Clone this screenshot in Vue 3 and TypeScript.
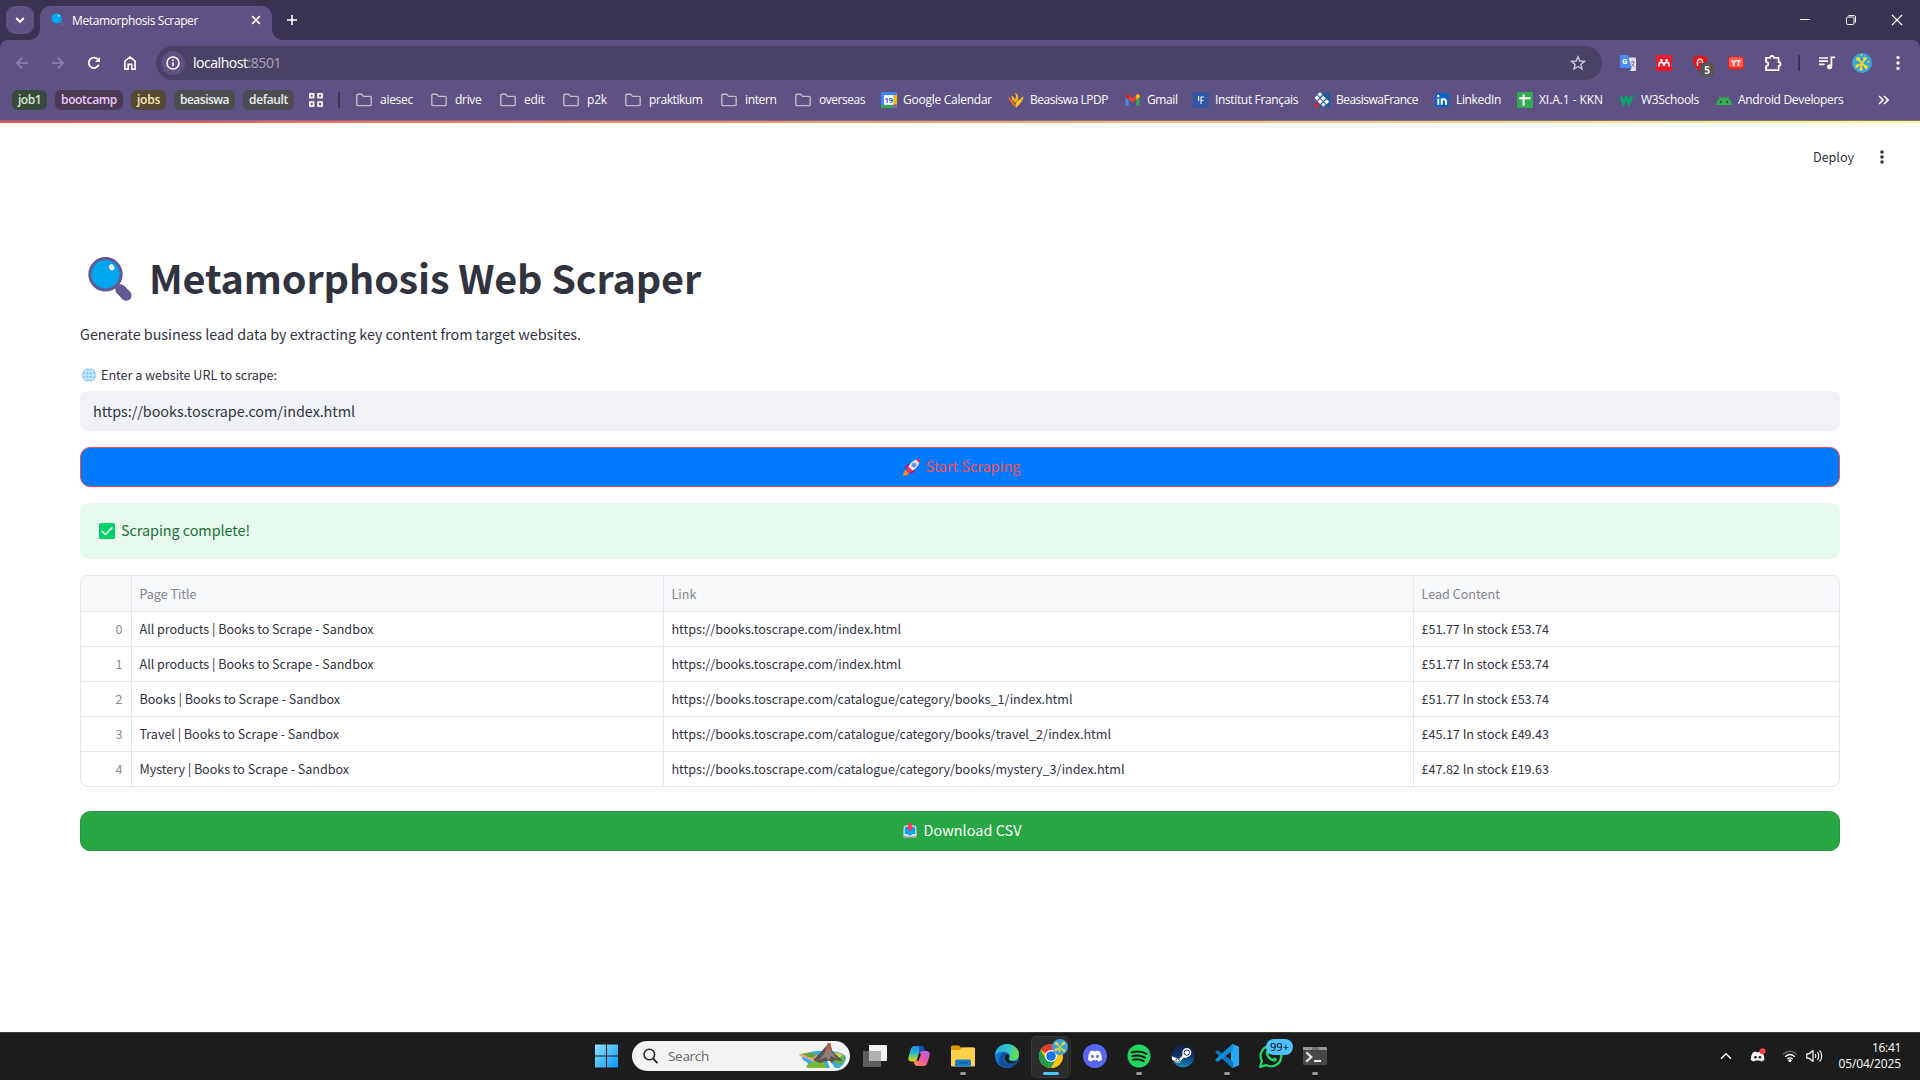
<script setup lang="ts">
import type { Directive } from 'vue'

// Spreads or tightens a label's letters so it fills the given width in pixels.
const vFit: Directive<HTMLElement, number> = {
  mounted(el, { value }) {
    const count = (el.textContent ?? '').length
    if (!count) return
    el.style.letterSpacing = `${(value - el.getBoundingClientRect().width) / count}px`
  },
}

interface Group { label: string; tone: string; width: number; fit: number }
const groups: Group[] = [
  { label: 'job1', tone: 'green', width: 35, fit: 23 },
  { label: 'bootcamp', tone: 'plum', width: 68, fit: 56 },
  { label: 'jobs', tone: 'olive', width: 35, fit: 23 },
  { label: 'beasiswa', tone: 'grey', width: 61, fit: 49 },
  { label: 'default', tone: 'grey', width: 51, fit: 39 },
]

interface Bookmark { label: string; icon: string; width: number; fit: number }
const bookmarks: Bookmark[] = [
  { label: 'aiesec', icon: 'folder', width: 75, fit: 33 },
  { label: 'drive', icon: 'folder', width: 69, fit: 26.5 },
  { label: 'edit', icon: 'folder', width: 63, fit: 20.5 },
  { label: 'p2k', icon: 'folder', width: 62, fit: 20 },
  { label: 'praktikum', icon: 'folder', width: 96, fit: 53.5 },
  { label: 'intern', icon: 'folder', width: 74, fit: 31.5 },
  { label: 'overseas', icon: 'folder', width: 86, fit: 46 },
  { label: 'Google Calendar', icon: 'calendar', width: 127, fit: 89 },
  { label: 'Beasiswa LPDP', icon: 'lpdp', width: 117, fit: 78 },
  { label: 'Gmail', icon: 'gmail', width: 68, fit: 30.5 },
  { label: 'Institut Français', icon: 'institut', width: 121, fit: 83 },
  { label: 'BeasiswaFrance', icon: 'france', width: 120, fit: 82 },
  { label: 'LinkedIn', icon: 'linkedin', width: 83, fit: 45 },
  { label: 'XI.A.1 - KKN', icon: 'sheet', width: 102, fit: 64 },
  { label: 'W3Schools', icon: 'w3', width: 97, fit: 58 },
  { label: 'Android Developers', icon: 'android', width: 134, fit: 105.5 },
]

interface Row { title: string; titleFit: number; link: string; linkFit: number; lead: string }
const rows: Row[] = [
  { title: 'All products | Books to Scrape - Sandbox', titleFit: 234, link: 'https://books.toscrape.com/index.html', linkFit: 229.5, lead: '£51.77 In stock £53.74' },
  { title: 'All products | Books to Scrape - Sandbox', titleFit: 234, link: 'https://books.toscrape.com/index.html', linkFit: 229.5, lead: '£51.77 In stock £53.74' },
  { title: 'Books | Books to Scrape - Sandbox', titleFit: 200.5, link: 'https://books.toscrape.com/catalogue/category/books_1/index.html', linkFit: 401, lead: '£51.77 In stock £53.74' },
  { title: 'Travel | Books to Scrape - Sandbox', titleFit: 199.5, link: 'https://books.toscrape.com/catalogue/category/books/travel_2/index.html', linkFit: 439.5, lead: '£45.17 In stock £49.43' },
  { title: 'Mystery | Books to Scrape - Sandbox', titleFit: 209.5, link: 'https://books.toscrape.com/catalogue/category/books/mystery_3/index.html', linkFit: 453, lead: '£47.82 In stock £19.63' },
]

interface App { name: string; state: '' | 'open' | 'active' }
const apps: App[] = [
  { name: 'taskview', state: '' },
  { name: 'copilot', state: '' },
  { name: 'explorer', state: 'open' },
  { name: 'edge', state: '' },
  { name: 'chrome', state: 'active' },
  { name: 'discord', state: '' },
  { name: 'spotify', state: 'open' },
  { name: 'steam', state: '' },
  { name: 'vscode', state: 'open' },
  { name: 'whatsapp', state: '' },
  { name: 'terminal', state: 'open' },
]
</script>

<template>
  <div class="screen">
    <header class="tabs">
      <button class="tab-search">
        <svg width="10" height="8" viewBox="0 0 10 8"><path d="M1.2 2 5 5.8 8.8 2" fill="none" stroke="#fff" stroke-width="2" /></svg>
      </button>
      <div class="tab">
        <svg class="favicon" width="14" height="14" viewBox="0 0 44 44">
          <path d="M29 28 38 38" stroke="#6b5b9a" stroke-width="9" stroke-linecap="round" />
          <circle cx="18" cy="17" r="16.5" fill="#00a6ed" /><circle cx="24" cy="9" r="3" fill="#e8f7ff" />
        </svg>
        <span v-fit="126" class="tab-title">Metamorphosis Scraper</span>
        <svg class="tab-close" width="10" height="10" viewBox="0 0 10 10"><path d="M1.2 1.2 8.8 8.8M8.8 1.2 1.2 8.8" stroke="#fff" stroke-width="1.7" /></svg>
      </div>
      <svg class="new-tab" width="10" height="10" viewBox="0 0 10 10"><path d="M5 0V10M0 5H10" stroke="#fff" stroke-width="1.6" /></svg>
      <div class="window-controls">
        <svg width="12" height="12" viewBox="0 0 12 12"><path d="M1 5.5H11" stroke="#fff" /></svg>
        <svg width="12" height="12" viewBox="0 0 12 12"><rect x="1.5" y="3" width="7.5" height="7.5" rx="1.3" fill="none" stroke="#fff" /><path d="M3.5 1.5H8.8Q10.5 1.5 10.5 3.2V8.5" fill="none" stroke="#fff" /></svg>
        <svg width="12" height="12" viewBox="0 0 12 12"><path d="M1 1 11 11M11 1 1 11" stroke="#fff" stroke-width="1.1" /></svg>
      </div>
    </header>

    <div class="toolbar">
      <div class="nav">
        <svg class="dim" width="14" height="14" viewBox="0 0 14 14"><path d="M13 7H2M7.3 1.5 1.8 7 7.3 12.5" fill="none" stroke="currentColor" stroke-width="1.6" /></svg>
        <svg class="dim" width="14" height="14" viewBox="0 0 14 14"><path d="M1 7H12M6.7 1.5 12.2 7 6.7 12.5" fill="none" stroke="currentColor" stroke-width="1.6" /></svg>
        <svg width="14" height="14" viewBox="0 0 14 14"><path d="M11.8 8.6A5.2 5.2 0 1 1 11 3.6L12.4 5" fill="none" stroke="#fff" stroke-width="1.8" /><path d="M13 1V6H8Z" fill="#fff" /></svg>
        <svg width="14" height="14" viewBox="0 0 14 14"><path d="M1.9 13.1V5.2L7 1.1 12.1 5.2V13.1H8.8V8.4H5.2V13.1Z" fill="none" stroke="#fff" stroke-width="1.6" /></svg>
      </div>
      <div class="omnibox">
        <div class="site-info">
          <svg width="14" height="14" viewBox="0 0 14 14"><circle cx="7" cy="7" r="6" fill="none" stroke="#fff" stroke-width="1.6" /><path d="M7 6.2V10.2M7 3.6V5.1" stroke="#fff" stroke-width="1.6" /></svg>
        </div>
        <span v-fit="88" class="address">localhost<i>:8501</i></span>
        <svg class="star" width="16" height="16" viewBox="0 0 16 16"><path d="M8 1.8 9.8 6 14.4 6.4 10.9 9.4 12 14 8 11.5 4 14 5.1 9.4 1.6 6.4 6.2 6Z" fill="none" stroke="#c9c6d3" stroke-width="1.4" /></svg>
      </div>
      <div class="extensions">
        <svg width="16" height="16" viewBox="0 0 16 16">
          <path d="M7 2.5H15Q16 2.5 16 3.5V15Q16 16 15 16H10Z" fill="#e1e3e6" /><path d="M1 0H8L11.5 13H1Q0 13 0 12V1Q0 0 1 0Z" fill="#4a8af4" /><path d="M8 13H11.5L10 16Z" fill="#2c5fc4" />
          <path d="M10.5 7H15M12.7 5.8V7M14 7Q13.5 10 11 12M11.5 8.5 14.5 12" fill="none" stroke="#6d7b87" stroke-width=".9" />
          <text x="2" y="9.2" class="glyph" font-size="7.5" font-weight="700" fill="#fff">G</text>
        </svg>
        <svg width="16" height="16" viewBox="0 0 16 16"><rect width="16" height="16" rx=".5" fill="#e81b2d" /><path d="M3 11.4V9.6Q3 7.4 5.2 7.4T8 9.4Q8.6 7.4 10.8 7.4T13 9.6V11.4" fill="none" stroke="#fff" stroke-width="1.6" /><circle cx="5.4" cy="5.4" r="1.4" fill="#fff" /><circle cx="10.6" cy="5.4" r="1.4" fill="#fff" /><circle cx="8" cy="9.6" r="1.4" fill="#fff" /></svg>
        <div class="blocker">
          <svg width="16" height="16" viewBox="0 0 16 16"><path d="M8 0Q11 2 15 2.2 15.4 11 8 16 .6 11 1 2.2 5 2 8 0Z" fill="#f20d0d" /><path d="M5.5 11V7Q5.5 4 8 4T10.5 7V11M8 6.5V8" fill="none" stroke="#ffd9d9" stroke-width="1.6" /></svg>
          <b>5</b>
        </div>
        <svg width="16" height="16" viewBox="0 0 16 16"><rect y="1.5" width="16" height="13" rx="3" fill="#e8271c" /><rect x="1" y="2.3" width="14" height="10" rx="2.5" fill="#ff5b52" /><text x="8" y="11" text-anchor="middle" class="glyph" font-size="8" font-weight="700" fill="#fff">YT</text></svg>
        <svg width="18" height="18" viewBox="0 0 18 18"><path d="M2 3.8H6.2Q6.2 1.8 8 1.8T9.8 3.8H14.6V8.2Q16.5 8.2 16.5 10T14.6 11.8V16.2H2V12.2Q4.4 12 4.4 10T2 7.8Z" fill="none" stroke="#fff" stroke-width="1.8" stroke-linejoin="round" /></svg>
      </div>
      <i class="divider" />
      <svg class="media" width="16" height="14" viewBox="0 0 16 14"><path d="M0 2H9M0 5.2H9M0 8.4H5.5M12.4 10.5V1.3H16" fill="none" stroke="#fff" stroke-width="1.7" /><circle cx="10.6" cy="10.7" r="2.5" fill="#fff" /></svg>
      <svg class="avatar" width="20" height="20" viewBox="0 0 20 20"><circle cx="10" cy="10" r="10" fill="#3ea2dc" /><path d="M6.5 6 10 10.5M13.5 5.5 10 10.5M5.5 13 10 10.5M14 14 10 10.5M9 15 10 10.5" stroke="#f5dc1c" stroke-width="1.7" /><g fill="#f5dc1c"><circle cx="6" cy="6" r="2" /><circle cx="13" cy="5.5" r="1.8" /><circle cx="5" cy="13" r="1.8" /><circle cx="9" cy="16" r="1.7" /><circle cx="14" cy="14" r="1.9" /><circle cx="16.5" cy="9" r="1" /><circle cx="9.5" cy="2" r=".9" /></g></svg>
      <svg class="menu" width="4" height="16" viewBox="0 0 4 16"><g fill="#fff"><circle cx="2" cy="2.6" r="1.7" /><circle cx="2" cy="8" r="1.7" /><circle cx="2" cy="13.4" r="1.7" /></g></svg>
    </div>

    <nav class="bookmarks">
      <div class="groups">
        <span v-for="g in groups" :key="g.label" class="group" :class="g.tone" :style="{ width: g.width + 'px' }"><span v-fit="g.fit">{{ g.label }}</span></span>
      </div>
      <svg class="apps-grid" width="14" height="14" viewBox="0 0 14 14"><g fill="none" stroke="#fff" stroke-width="1.7"><rect x=".9" y=".9" width="3.7" height="3.7" /><rect x="9.1" y=".9" width="3.9" height="3.7" /><rect x=".9" y="9.1" width="3.7" height="3.9" /><rect x="9.1" y="9.1" width="3.9" height="3.9" /></g></svg>
      <i class="divider" />
      <div class="links">
        <a v-for="b in bookmarks" :key="b.label" class="bookmark" :class="{ folder: b.icon === 'folder' }" :style="{ width: b.width + 'px' }">
          <svg width="16" height="16" viewBox="0 0 16 16">
            <path v-if="b.icon === 'folder'" d="M.8 3.4Q.8 2.3 1.9 2.3H5.6L7.5 4.4H14.1Q15.2 4.4 15.2 5.5V12.5Q15.2 13.6 14.1 13.6H1.9Q.8 13.6 .8 12.5Z" fill="none" stroke="#c0bcc8" stroke-width="1.4" />
            <g v-else-if="b.icon === 'calendar'"><rect width="16" height="16" rx="1.5" fill="#4285f4" /><path d="M12.5 3H16V12.5H12.5Z" fill="#fbbc04" /><path d="M0 12.5H12.5V16H1.5Q0 16 0 14.5Z" fill="#34a853" /><path d="M12.5 12.5H16L12.5 16Z" fill="#ea4335" /><rect x="3" y="3.2" width="9.5" height="9.5" fill="#fff" /><text x="7.8" y="10.8" text-anchor="middle" class="glyph" font-size="7.5" font-weight="700" fill="#2a66d9">19</text></g>
            <g v-else-if="b.icon === 'lpdp'"><path d="M0 5Q5 6 8 15 4 13.5 0 5Z" fill="#f06a1c" /><path d="M16 4Q14 11 8 15.8 7 12.5 9 9.5 11.5 7.5 16 4Z" fill="#fbc51b" /><path d="M6.5 .5Q12 3 9.8 8L7.5 11Q5.5 9 7.8 5.5 8.6 3.5 6.5 .5Z" fill="#f9b21a" /><path d="M3.2 3.5Q7 5 7 10 4.5 8.5 3.2 3.5Z" fill="#f9d21a" /></g>
            <g v-else-if="b.icon === 'gmail'"><path d="M.5 3.5V13.5H3.8V6Z" fill="#4285f4" /><path d="M11.2 6V13.5H14.5V3.5Z" fill="#34a853" /><path d="M.5 3.8Q.5 1.8 2.6 2.2L7.5 6.2 12.4 2.2Q14.5 1.8 14.5 3.8L14.4 5.2 7.5 10.3 .5 5.2Z" fill="#ea4335" /><path d="M11.2 3.2 12.4 2.2Q14.5 1.8 14.5 3.8V5.2L11.2 7.6Z" fill="#fbbc04" /><path d="M.5 3.8Q.5 1.8 2.6 2.2L3.8 3.1V7.6L.5 5.2Z" fill="#c5221f" /></g>
            <g v-else-if="b.icon === 'institut'"><rect width="16" height="16" fill="#3157a4" /><path d="M5.6 4V9M8 12V5H11M8 8.5H10.5" fill="none" stroke="#e9eefa" stroke-width="1.2" /></g>
            <g v-else-if="b.icon === 'france'"><path d="M3 1H16V15H5Z" fill="#2159a5" /><g fill="#fff"><path d="M6 0 8.5 2.5 6 5 3.5 2.5Z" /><path d="M3 3.5 5.5 6 3 8.5 .5 6Z" /><path d="M9.3 3.7 11.8 6.2 9.3 8.7 6.8 6.2Z" /><path d="M6.1 7 8.6 9.5 6.1 12 3.6 9.5Z" /><path d="M12.6 7.2 15.1 9.7 12.6 12.2 10.1 9.7Z" /><path d="M9.4 10.4 11.6 12.6 9.4 14.8 7.2 12.6Z" /></g><path d="M3 10.5 5.6 13.2 3 16 .4 13.2Z" fill="#e52321" /></g>
            <g v-else-if="b.icon === 'linkedin'"><rect x="1" y="1" width="14" height="14" rx="1" fill="#0a66c2" /><path d="M4.3 6.4V12.7M7.7 12.7V6.4M7.7 9.3Q8 7.2 9.9 7.2T12 9.4V12.7" fill="none" stroke="#fff" stroke-width="1.9" /><circle cx="4.3" cy="4" r="1.2" fill="#fff" /></g>
            <g v-else-if="b.icon === 'sheet'"><rect width="16" height="16" rx="1.2" fill="#34a853" /><path d="M2.3 6.2H13.7M6.6 2.5V13.7" stroke="#fff" stroke-width="1.9" /></g>
            <g v-else-if="b.icon === 'w3'"><path d="M2 4.5 4.6 11.6 7.4 5.5 10 11.6 12.6 4.5" fill="none" stroke="#04aa6d" stroke-width="2.7" /><path d="M13.4 3.3H15.4L14.4 4.6Q15.8 4.8 15.4 6 14.8 6.8 13.4 6.3" fill="none" stroke="#04aa6d" stroke-width=".7" /></g>
            <g v-else><path d="M0 13Q.8 5.5 8 5.3 15.2 5.5 16 13Z" fill="#34a853" /><path d="M4.8 6.6 2.8 3.4M11.2 6.6 13.2 3.4" stroke="#34a853" stroke-width="1.1" /><circle cx="4.7" cy="10" r=".9" fill="#1c4026" /><circle cx="11.3" cy="10" r=".9" fill="#1c4026" /></g>
          </svg>
          <span v-fit="b.fit">{{ b.label }}</span>
        </a>
      </div>
      <svg class="more" width="11" height="10" viewBox="0 0 11 10"><path d="M1 1 5 5 1 9M6 1 10 5 6 9" fill="none" stroke="#fff" stroke-width="1.6" /></svg>
    </nav>

    <main class="page">
      <div class="decoration" />
      <div class="app-bar">
        <span v-fit="41" class="deploy">Deploy</span>
        <svg width="4" height="14" viewBox="0 0 4 14"><g fill="#31333f"><circle cx="2" cy="2" r="1.8" /><circle cx="2" cy="7" r="1.8" /><circle cx="2" cy="12" r="1.8" /></g></svg>
      </div>
      <div class="content">
        <h1>
          <svg width="44" height="44" viewBox="0 0 44 44">
            <path d="M28 28 32 32" stroke="#635994" stroke-width="5" />
            <path d="M32.5 32.5 38.3 38.5" stroke="#635994" stroke-width="10.5" stroke-linecap="round" />
            <circle cx="17.5" cy="17.3" r="15.7" fill="#00a6ed" stroke="#635994" stroke-width="3" />
            <ellipse cx="23.6" cy="10.3" rx="2.6" ry="3.2" fill="#fff" transform="rotate(-25 23.6 10.3)" />
          </svg>
          <span v-fit="552">Metamorphosis Web Scraper</span>
        </h1>
        <p class="lede"><span v-fit="501">Generate business lead data by extracting key content from target websites.</span></p>
        <label class="field-label">
          <svg width="14" height="14" viewBox="0 0 14 14"><circle cx="7" cy="7" r="7" fill="#83cbff" /><path d="M7 0V14M0 7H14M1.3 3.4H12.7M1.3 10.6H12.7" stroke="#eef8ff" stroke-width=".8" /><ellipse cx="7" cy="7" rx="3.8" ry="6.8" fill="none" stroke="#eef8ff" stroke-width=".8" /></svg>
          <span v-fit="176">Enter a website URL to scrape:</span>
        </label>
        <div class="field"><span v-fit="262">https://books.toscrape.com/index.html</span></div>

        <button class="action start">
          <svg width="17" height="17" viewBox="0 0 17 17">
            <path d="M4.2 9.5 1.5 9.8 4 6Q5 4.8 7.3 5.2ZM7.5 12.8 7.2 15.5 11 13Q12.2 12 11.8 9.7Z" fill="#ca0b4a" />
            <path d="M1 12.5Q2 10.8 4 11.3L5.6 13Q6 15 4.5 16L0 17Z" fill="#ff822d" />
            <path d="M4 11.6Q6 3 13.5 .6L16.4 3.5Q14 11 5.5 13.1Z" fill="#f1eff5" />
            <path d="M13 .8Q15 0 17 0 17 2 16.2 4Z" fill="#f8312f" />
            <path d="M3.6 12.2Q3.8 9.8 5.6 7.8L9.4 11.5Q7 13.4 4.8 13.5Z" fill="#f8315f" />
            <circle cx="11" cy="6" r="2.3" fill="#5092ff" stroke="#b4acbc" stroke-width=".9" />
          </svg>
          <span v-fit="95">Start Scraping</span>
        </button>

        <div class="alert">
          <svg width="16" height="16" viewBox="0 0 16 16"><rect width="16" height="16" rx="1.6" fill="#00d26a" /><path d="M3.2 8.4 6.4 11.5 12.9 4.9" fill="none" stroke="#f4f4f4" stroke-width="1.7" stroke-linecap="round" stroke-linejoin="round" /></svg>
          <span v-fit="129">Scraping complete!</span>
        </div>

        <div class="grid">
          <div class="row head">
            <div class="cell index" />
            <div class="cell title"><span v-fit="57">Page Title</span></div>
            <div class="cell link"><span v-fit="25">Link</span></div>
            <div class="cell lead"><span v-fit="78.5">Lead Content</span></div>
          </div>
          <div v-for="(r, i) in rows" :key="i" class="row">
            <div class="cell index">{{ i }}</div>
            <div class="cell title"><span v-fit="r.titleFit">{{ r.title }}</span></div>
            <div class="cell link"><span v-fit="r.linkFit">{{ r.link }}</span></div>
            <div class="cell lead"><span v-fit="127.5">{{ r.lead }}</span></div>
          </div>
        </div>

        <button class="action download">
          <svg width="14" height="15" viewBox="0 0 14 15">
            <path d="M1 7H13L14 12V15H0V12Z" fill="#9b9b9b" /><rect x=".6" y="2.5" width="12.8" height="11" rx="2.2" fill="#d9dde3" />
            <path d="M1.8 3.8H12.2V11H9.2L8.4 12.2H5.6L4.8 11H1.8Z" fill="#00a6ed" /><path d="M5.3 0H8.7V4H11L7 8.4 3 4H5.3Z" fill="#f8315f" />
          </svg>
          <span v-fit="98">Download CSV</span>
        </button>
      </div>
    </main>

    <footer class="taskbar">
      <div class="pinned">
        <svg class="start-logo" width="24" height="24" viewBox="0 0 24 24">
          <defs><linearGradient id="win" x1="0" y1="0" x2="1" y2="1"><stop offset="0" stop-color="#8fe4ff" /><stop offset="1" stop-color="#0a93f5" /></linearGradient></defs>
          <path d="M0 .5H11V11.5H0ZM12 .5H23V11.5H12ZM0 12.5H11V23.5H0ZM12 12.5H23V23.5H12Z" fill="url(#win)" />
        </svg>
        <div class="search">
          <svg width="15" height="16" viewBox="0 0 15 16"><circle cx="6.3" cy="6.5" r="5.3" fill="none" stroke="#2b2b2b" stroke-width="1.6" /><path d="M10.2 10.6 14 14.6" stroke="#2b2b2b" stroke-width="1.9" stroke-linecap="round" /></svg>
          <span v-fit="41">Search</span>
          <svg class="highlight" width="48" height="26" viewBox="0 0 48 26">
            <path d="M2 12Q14 7 30 8T47 15Q46 21 40 25H8Q12 20 4 17Z" fill="#39a8e8" />
            <path d="M0 11Q7 9 16 11L26 17 14 19Q8 15 1 13Z" fill="#d9b27c" /><path d="M3 11Q9 9 18 11L14 15Q8 14 3 11Z" fill="#6aa43a" />
            <path d="M8 22Q16 16 26 20L28 25H10Q6 24 8 22Z" fill="#79b82f" /><path d="M31 11Q40 8 46 14L45 19 38 22Z" fill="#68b53b" /><path d="M34 10Q41 9 44 13L38 15Z" fill="#d3cf4d" />
            <path d="M14 17 22 9 28 2 31 2 34 9 44 18 36 17 31 21 27 18 21 20Z" fill="#5f5351" /><path d="M28 3 25 11 20 17 27 14 30 18 32 13 38 16 32 8 31 3Z" fill="#8f7f78" />
            <path d="M26.5 8 28.5 0 31.5 0 33 8 30 6Z" fill="#b45f4e" /><path d="M28 18 31 25H36Q33 21 31 18Z" fill="#f5fbff" />
          </svg>
        </div>
        <div v-for="a in apps" :key="a.name" class="app" :class="a.state">
          <svg width="24" height="24" viewBox="0 0 24 24">
            <g v-if="a.name === 'taskview'"><rect x="6" y="1" width="18" height="16" rx="1" fill="#f2f2f2" /><rect x="0" y="7" width="18" height="16" rx="1" fill="#5d5d5d" /><path d="M6 7H18V17H6Z" fill="#b1b1b1" /></g>
            <g v-else-if="a.name === 'copilot'">
              <defs><linearGradient id="co1" x1="0" y1="0" x2="0" y2="1"><stop offset="0" stop-color="#1b8df3" /><stop offset=".45" stop-color="#27b5c8" /><stop offset=".75" stop-color="#8fd14f" /><stop offset="1" stop-color="#f8c62c" /></linearGradient><linearGradient id="co2" x1="1" y1="0" x2="0" y2="1"><stop offset="0" stop-color="#a963f1" /><stop offset=".5" stop-color="#f0589b" /><stop offset="1" stop-color="#ff9b3d" /></linearGradient></defs>
              <path d="M7 2H14Q16.5 2 17.2 4.5L17.8 7H15Q12.5 7 11.6 10L10 15Q9 18 6 17.5H4Q.5 17 1.6 12.5L3.8 5Q4.8 2 7 2Z" fill="url(#co1)" />
              <path d="M17 22H10.5Q8 22 7.2 19.5L6.6 17.5Q9.2 17.6 10 15L12.2 9Q13.2 6.7 16 7H19.8Q23.5 7.3 22.5 11.5L20.4 19Q19.4 22 17 22Z" fill="url(#co2)" /><path d="M12 2H14Q16.5 2 17.2 4.5L17.8 7H16Q13 7 12.2 9Z" fill="#174cb8" /><path d="M12.2 9 9.8 16.4 11.6 17 14 10Z" fill="#1c1c1c" />
            </g>
            <g v-else-if="a.name === 'explorer'"><path d="M0 3Q0 1.5 1.5 1.5H8L10 3.5H22.5Q24 3.5 24 5V10H0Z" fill="#e0970c" /><path d="M0 6H8.5L11 3.5H22.5Q24 3.5 24 5V21.5Q24 22.5 23 22.5H1Q0 22.5 0 21.5Z" fill="#ffd04a" /><path d="M4 22.5V17.5Q4 15.5 6 15.5H18Q20 15.5 20 17.5V22.5Z" fill="#1380cf" /><path d="M7.5 18.7H16.5" stroke="#0b559a" stroke-width="1.5" /></g>
            <g v-else-if="a.name === 'edge'">
              <defs><linearGradient id="ed" x1="0" y1="0" x2="1" y2=".3"><stop offset="0" stop-color="#27a8e4" /><stop offset=".55" stop-color="#2ac4c7" /><stop offset="1" stop-color="#68dd5c" /></linearGradient></defs>
              <circle cx="12" cy="12" r="12" fill="#1474cf" /><path d="M0 12C0 5 5 0 12 0S24 5 24 10.5C24 14.5 21 16.4 18 16.4 14.8 16.4 13.3 15.3 14.2 14.2 16.4 10.5 13 7.7 8.8 7.7 4.2 7.7 .7 9.5 0 12Z" fill="url(#ed)" /><path d="M8.5 8.2Q14 10 9.8 12.5 7.5 19 15 20.2 19 20.5 22.5 17.2 19 23.8 12 24 4 23.5 4 16.5 4.5 10 8.5 8.2Z" fill="#124f9d" /><path d="M10.2 12Q8.5 19.5 17 19.7 20 19.5 22.7 17 17 18.5 13.8 16Q13 15 14.2 13.8Q14.8 10.5 11.8 9.8Z" fill="#1c1c1c" />
            </g>
            <g v-else-if="a.name === 'chrome'"><circle cx="12" cy="12" r="12" fill="#fbc116" /><path d="M12 12 1.6 6A12 12 0 0 1 22.4 6H12Z" fill="#e33b2e" /><path d="M1.6 6A12 12 0 0 0 12 24L17.2 15 12 12 6.8 15Z" fill="#229b4b" /><path d="M12 6H22.4A12 12 0 0 1 12 24L17.2 15Z" fill="#fbc116" /><circle cx="12" cy="12" r="6" fill="#fff" /><circle cx="12" cy="12" r="4.8" fill="#1a73e8" /></g>
            <g v-else-if="a.name === 'discord'"><circle cx="12" cy="12" r="12" fill="#5865f2" /><path d="M7.3 7.3Q9 6.5 10.1 6.4L10.6 7.3H13.4L13.9 6.4Q15.3 6.6 16.7 7.3 19.3 11 18.9 15.7 17 17.2 15.2 17.5L14.3 16.1Q12 16.6 9.7 16.1L8.8 17.5Q7 17.2 5.1 15.7 4.7 11 7.3 7.3Z" fill="#fff" /><ellipse cx="9.5" cy="12.4" rx="1.4" ry="1.6" fill="#5865f2" /><ellipse cx="14.5" cy="12.4" rx="1.4" ry="1.6" fill="#5865f2" /></g>
            <g v-else-if="a.name === 'spotify'"><circle cx="12" cy="12" r="11.5" fill="#1ed760" /><path d="M4.7 8.5Q12.5 6 19.6 9.9M5.4 12.3Q12 10.4 18 13.6M6 15.8Q11.8 14.4 16.6 17" fill="none" stroke="#171717" stroke-width="2" stroke-linecap="round" /></g>
            <g v-else-if="a.name === 'steam'">
              <defs><linearGradient id="st" x1="0" y1="0" x2="0" y2="1"><stop offset="0" stop-color="#141b45" /><stop offset=".5" stop-color="#0d3466" /><stop offset="1" stop-color="#1689bf" /></linearGradient></defs>
              <circle cx="12" cy="12" r="11.3" fill="url(#st)" /><path d="M.8 12.2 8 15 12.5 10.5 14 12.5 9.5 17Q8.5 20 5.8 19 4 18.5 3.5 16.8L1 15.8Z" fill="#fff" /><path d="M11.5 11 16 12.5" stroke="#fff" stroke-width="3.6" /><circle cx="15.8" cy="8.6" r="4.5" fill="#fff" /><circle cx="15.8" cy="8.6" r="2.7" fill="none" stroke="#173057" stroke-width="1" /><circle cx="6.6" cy="16.6" r="1.8" fill="none" stroke="#173057" stroke-width=".8" />
            </g>
            <g v-else-if="a.name === 'vscode'"><path d="M17.3 0 24 2.8V21.2L17.3 24 16 18V6Z" fill="#29a9f2" /><path d="M17.3 24 0 8.3 2 6.4Q2.6 6 3.3 6.5L18 17.8V23Z" fill="#0877bd" /><path d="M17.3 0 0 15.7 2 17.6Q2.6 18 3.3 17.5L18 6.2V1Z" fill="#118fd6" /></g>
            <g v-else-if="a.name === 'whatsapp'"><path d="M1.2 22.8 2.9 17A10.3 10.3 0 1 1 7 21.1Z" fill="none" stroke="#25d366" stroke-width="2.3" stroke-linejoin="round" /><path d="M7.4 6.4Q8.7 5.4 9.4 7L10.2 8.9 9.3 10.4Q11 13.5 14 14.7L15.4 13.3 17.8 14.6Q18 17 15.7 17.7 12.5 18 8.7 14 5.2 9.4 7.4 6.4Z" fill="#25d366" /></g>
            <g v-else><rect x="0" y="3" width="24" height="18" rx="1" fill="#474747" /><path d="M0 6V4Q0 3 1 3H23Q24 3 24 4V6Z" fill="#9a9a9a" /><path d="M9 3H16V6H9Z" fill="#717171" /><path d="M3.2 8.3 8.3 13 3.2 17.7" fill="none" stroke="#e4e4e4" stroke-width="2.3" /><path d="M11 17H18" stroke="#fff" stroke-width="1.8" /></g>
          </svg>
          <svg v-if="a.name === 'chrome'" class="profile" width="16" height="16" viewBox="0 0 16 16"><circle cx="8" cy="8" r="8" fill="#3ea2dc" /><path d="M4.5 4.5 8 8.5M11.5 4 8 8.5M4 11 8 8.5M12 11.5 8 8.5M7.5 13 8 8.5" stroke="#f5dc1c" stroke-width="1.5" stroke-dasharray="3.4 .6" /><g fill="#f5dc1c"><circle cx="11.6" cy="4.2" r="1.5" /><circle cx="4.4" cy="4.4" r="1.5" /><circle cx="3.6" cy="11" r="1.3" /><circle cx="12" cy="11.6" r="1.4" /></g></svg>
          <span v-if="a.name === 'whatsapp'" class="count">99+</span>
          <i v-if="a.state" class="indicator" />
        </div>
      </div>
      <div class="tray">
        <svg class="caret" width="12" height="8" viewBox="0 0 12 8"><path d="M1 6.8 6 1.8 11 6.8" fill="none" stroke="#fff" stroke-width="1.4" /></svg>
        <svg class="chat" width="16" height="16" viewBox="0 0 16 16"><path d="M3 4.3Q4.6 3.4 5.7 3.4L6.2 4.3H9L9.5 3.4Q11 3.6 12.2 4.3 14.8 8 14.4 12 12.5 13.3 11 13.6L10.1 12.4H5.1L4.2 13.6Q2.7 13.3 .8 12 .4 8 3 4.3Z" fill="#f5f5f5" /><circle cx="5.4" cy="9.2" r="1.3" fill="#1c1c1c" /><circle cx="10" cy="9.2" r="1.3" fill="#1c1c1c" /><circle cx="12.5" cy="3.2" r="3" fill="#f23f42" /></svg>
        <svg class="wifi" width="16" height="14" viewBox="0 0 16 14"><path d="M1 5.5Q8-1 15 5.5" fill="none" stroke="#686868" stroke-width="1.2" /><path d="M3.2 7.8Q8 3.3 12.8 7.8M5.3 10Q8 7.7 10.7 10" fill="none" stroke="#fff" stroke-width="1.3" /><circle cx="8" cy="11.6" r="1.6" fill="#fff" /></svg>
        <svg class="sound" width="17" height="14" viewBox="0 0 17 14"><path d="M.8 4.8H3.2L7 1.5V12.5L3.2 9.2H.8Z" fill="none" stroke="#fff" stroke-width="1.2" stroke-linejoin="round" /><path d="M9.2 5Q10.4 7 9.2 9M11.4 3Q14 7 11.4 11M13.6 1.2Q17.8 7 13.6 12.8" fill="none" stroke="#fff" stroke-width="1.1" /></svg>
        <div class="clock"><span v-fit="29">16:41</span><span v-fit="62.5">05/04/2025</span></div>
      </div>
    </footer>
  </div>
</template>

<style>
body { margin: 0; background: #fff; }
</style>

<style scoped>
* { box-sizing: border-box; }
svg { display: block; flex: none; }
button { border: 0; padding: 0; margin: 0; font: inherit; color: inherit; }
span { white-space: nowrap; }
i { font-style: normal; }
.glyph { font-family: "Open Sans", sans-serif; }
.screen { width: 1920px; height: 1080px; overflow: hidden; display: flex; flex-direction: column; background: #3b3354; font-family: "Open Sans", "Noto Sans", sans-serif; color: #fff; }

/* tab strip */
.tabs { height: 40px; flex: none; display: flex; align-items: flex-start; background: #3b3354; }
.tab-search { width: 28px; height: 28px; margin: 6px 6px 0; border-radius: 9px; background: #5e5184; display: flex; align-items: center; justify-content: center; }
.tab { position: relative; width: 232px; height: 34px; margin-top: 6px; border-radius: 10px 10px 0 0; background: #5e5184; display: flex; align-items: center; padding: 0 11px 6px 11px; }
.tab::before, .tab::after { content: ""; position: absolute; bottom: 0; width: 10px; height: 10px; }
.tab::before { left: -10px; background: radial-gradient(circle at 0 0, transparent 9.5px, #5e5184 10px); }
.tab::after { right: -10px; background: radial-gradient(circle at 100% 0, transparent 9.5px, #5e5184 10px); }
.tab-title { margin-left: 7px; padding-top: 1px; font-size: 12px; line-height: 18px; }
.tab-close { margin-left: auto; }
.new-tab { margin: 15px 0 0 15px; }
.window-controls { margin: 14px 17px 0 auto; display: flex; gap: 34px; }

/* toolbar */
.toolbar { height: 46px; flex: none; display: flex; align-items: center; background: #5e5184; border-radius: 8px 8px 0 0; }
.nav { display: flex; gap: 22px; margin-left: 15px; }
.dim { color: #8f85ad; }
.omnibox { width: 1446px; height: 34px; margin-left: 19px; border-radius: 17px; background: #494166; display: flex; align-items: center; padding: 0 16px 0 5px; }
.site-info { width: 24px; height: 24px; border-radius: 50%; background: #5e5184; display: flex; align-items: center; justify-content: center; }
.address { margin-left: 8px; font-size: 14px; line-height: 20px; }
.address i { color: #a9a4b8; }
.star { margin-left: auto; }
.extensions { display: flex; align-items: center; gap: 20px; margin-left: 18px; }
.blocker { position: relative; }
.blocker b { position: absolute; left: 8px; top: 8px; width: 14px; height: 14px; border-radius: 3px; background: #555; font-size: 10px; line-height: 14px; text-align: center; }
.divider { width: 2px; height: 16px; border-radius: 1px; background: #3b3354; }
.toolbar .divider { margin-left: 16px; }
.media { margin-left: 19px; }
.avatar { margin-left: 17px; }
.menu { margin-left: 24px; }

/* bookmarks */
.bookmarks { height: 35px; flex: none; display: flex; align-items: flex-start; padding: 4px 0 0 12px; background: #5e5184; border-bottom: 1px solid #7a7295; font-size: 12px; }
.groups { display: flex; gap: 8px; }
.group { height: 20px; border-radius: 6px; display: flex; align-items: center; justify-content: center; font-weight: 600; line-height: 18px; padding-bottom: 1px; }
.green { background: #3a4a3e; color: #c9efcd; }
.plum { background: #4a3a55; color: #e8cbfa; }
.olive { background: #544a35; color: #fbeab0; }
.grey { background: #4b4d50; color: #eceef0; }
.apps-grid { margin: 3px 0 0 15px; }
.bookmarks .divider { margin: 2px 0 0 15px; }
.links { display: flex; margin-left: 16px; }
.bookmark { height: 20px; flex: none; display: flex; align-items: center; gap: 6px; line-height: 18px; }
.folder { gap: 8px; }
.bookmark > span { padding-bottom: 1px; }
.more { margin: 5px 0 0 28px; }

/* page */
.page { flex: 1; background: #fff; color: #31333f; font-family: "Noto Sans CJK SC", "Open Sans", sans-serif; font-size: 14.4px; }
.decoration { height: 2px; background: linear-gradient(90deg, #ff4b4b, #fffd80); }
.app-bar { height: 68px; display: flex; align-items: center; justify-content: flex-end; gap: 26px; padding-right: 36px; }
.deploy { font-size: 12.6px; line-height: 20px; }
.content { padding: 57px 80px 0; }
h1 { margin: 0; height: 58px; display: flex; align-items: center; padding-left: 8px; gap: 17px; font-size: 39.6px; line-height: 58px; font-weight: 700; }
h1 svg { margin-top: 3px; }
.lede { margin: 16px 0 0; line-height: 24px; }
.field-label { display: flex; align-items: center; gap: 5px; margin-top: 17px; padding-left: 2px; height: 24px; font-size: 12.6px; line-height: 24px; }
.field { margin-top: 4px; height: 40px; border-radius: 8px; background: #f0f2f6; padding: 0 13px; line-height: 40px; }
.action { width: 100%; height: 40px; display: flex; align-items: center; justify-content: center; border-radius: 10px; gap: 6px; line-height: 20px; }
.action span, .alert span { padding-bottom: 2px; }
.start { margin-top: 16px; background: #007bff; border: 1px solid #ff4b4b; color: #ff4b4b; padding-left: 3px; }
.alert { margin-top: 16px; height: 56px; border-radius: 8px; background: #e8f9ee; color: #177233; display: flex; align-items: center; gap: 6px; padding-left: 19px; line-height: 20px; }
.grid { margin-top: 16px; height: 212px; border: 1px solid #e6e7ea; border-radius: 8px; overflow: hidden; font-size: 12.6px; }
.row { display: flex; height: 35px; border-bottom: 1px solid #e8e9eb; }
.row:last-child { border-bottom: 0; height: 34px; }
.head { height: 36px; background: #f8f9fb; color: #84858c; }
.cell { height: 100%; line-height: 34px; padding-left: 7.5px; border-right: 1px solid #e6e7ea; }
.head .cell { line-height: 36px; }
.cell.index { width: 51px; text-align: right; padding: 0 8.5px 0 0; color: #8b8c93; }
.title { width: 532px; }
.link { width: 750px; }
.lead { flex: 1; border-right: 0; }
.download { margin-top: 24px; background: #28a745; border: 1px solid #2e9546; color: #fff; gap: 7px; padding-left: 4px; }
.download svg { margin-bottom: 1px; }

/* taskbar */
.taskbar { height: 48px; flex: none; display: flex; justify-content: space-between; background: #1c1c1c; border-top: 1px solid #3a3a3a; padding-bottom: 1px; }
.pinned { display: flex; align-items: center; margin-left: 595px; }
.search { width: 218px; height: 30px; margin: 0 3px 0 13px; border-radius: 15px; background: #f3f3f3; color: #666; display: flex; align-items: center; padding: 0 3px 0 11px; font-size: 13.5px; }
.search span { margin-left: 10px; }
.highlight { margin-left: auto; }
.app { position: relative; width: 44px; height: 40px; display: flex; align-items: center; justify-content: center; }
.app.active::before { content: ""; position: absolute; left: 2px; top: 0; width: 38px; height: 40px; border-radius: 5px; background: #242424; border: 1px solid #333; }
.app.active::after { content: ""; position: absolute; left: 2px; top: 0; width: 35px; height: 40px; border-radius: 5px; background: #2c2c2c; border: 1px solid #393939; z-index: 0; }
.app > svg { position: relative; z-index: 1; }
.app .profile { position: absolute; left: 23px; top: 3px; z-index: 2; }
.indicator { position: absolute; z-index: 2; left: 19px; bottom: 1px; width: 6px; height: 3px; border-radius: 2px; background: #9a9a9a; }
.active .indicator { left: 14px; width: 16px; background: #4cc2ff; }
.count { position: absolute; z-index: 2; left: 17px; top: 3px; width: 27px; height: 16px; border-radius: 8px; background: #4cc2ff; color: #000; font-size: 11px; line-height: 16px; text-align: center; }
.tray { display: flex; align-items: center; padding-right: 19px; }
.chat { margin-left: 18px; }
.wifi { margin-left: 16px; }
.sound { margin-left: 8px; }
.clock { width: 78px; display: flex; flex-direction: column; align-items: flex-end; font-size: 12px; line-height: 16px; }
</style>
